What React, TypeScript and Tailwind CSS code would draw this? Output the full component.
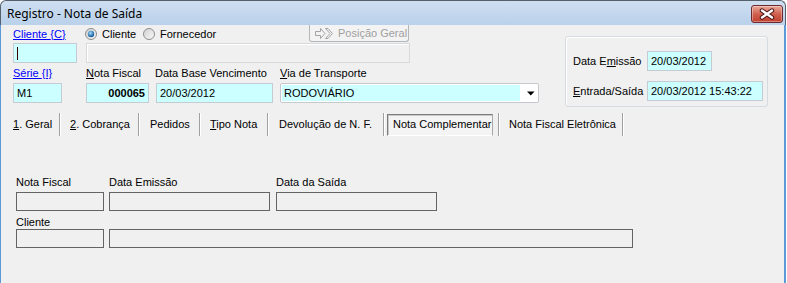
import React from "react";

// Registro - Nota de Saída (janela estilo Windows 7)

const RadioDot: React.FC<{ checked?: boolean }> = ({ checked }) => (
  <svg width="12" height="12" viewBox="0 0 12 12" className="shrink-0">
    <defs>
      <linearGradient id={checked ? "rgOn" : "rgOff"} x1="0" y1="0" x2="1" y2="1">
        <stop offset="0" stopColor="#cfcfcf" />
        <stop offset="1" stopColor="#fbfbfb" />
      </linearGradient>
      <radialGradient id="rbDot" cx="40%" cy="35%" r="65%">
        <stop offset="0" stopColor="#a6dcff" />
        <stop offset="1" stopColor="#0b5596" />
      </radialGradient>
    </defs>
    <circle cx="6" cy="6" r="5.5" fill={`url(#${checked ? "rgOn" : "rgOff"})`} stroke="#8d8d8d" />
    {checked && <circle cx="6" cy="6" r="3.2" fill="url(#rbDot)" />}
  </svg>
);

const CloseButton = () => (
  <div className="mt-[4px] h-[18px] w-[32px] rounded-[3px] border border-[#6e2a2a] bg-gradient-to-b from-[#e9a99b] via-[#d0614f] to-[#bf3d2b] shadow-[inset_0_0_0_1px_rgba(255,255,255,0.35)]">
    <svg width="30" height="16" viewBox="0 0 30 16">
      <path d="M10 4.5 L20 11.5 M20 4.5 L10 11.5" stroke="#4a1414" strokeWidth="4.4" strokeLinecap="round" />
      <path d="M10 4.5 L20 11.5 M20 4.5 L10 11.5" stroke="#ffffff" strokeWidth="2.4" strokeLinecap="round" />
    </svg>
  </div>
);

const ArrowsIcon = () => (
  <svg width="19" height="11" viewBox="0 0 19 11" className="shrink-0">
    <path d="M0.5 3.5 H5.5 V0.5 L10 5.5 L5.5 10.5 V7.5 H0.5 Z" fill="none" stroke="#a3a3a3" />
    <path d="M10.5 0.5 H13 L17.5 5.5 L13 10.5 H10.5 L15 5.5 Z" fill="none" stroke="#a3a3a3" />
  </svg>
);

const Box: React.FC<{ w: string; children?: React.ReactNode; className?: string }> = ({ w, children, className = "" }) => (
  <div className={`${w} flex h-[20px] items-center whitespace-nowrap border border-[#c4cbd3] bg-[#ccffff] px-[3px] ${className}`}>{children}</div>
);

const Sep = () => <div className="h-[23px] w-[2px] border-l border-r border-l-[#a0a0a0] border-r-white" />;

const Tab: React.FC<{ w: string; children: React.ReactNode }> = ({ w, children }) => (
  <div className={`${w} flex h-[23px] items-center whitespace-nowrap`}>{children}</div>
);

export default function App() {
  return (
    <div className="h-[283px] w-[787px] overflow-hidden bg-white font-['Liberation_Sans',Arial,sans-serif] text-[11px] leading-[13px] text-black">
      <div className="flex h-full w-[786px] flex-col">
        {/* barra de título */}
        <div className="flex h-[25px] shrink-0 items-start justify-between rounded-t-[6px] border-x border-t border-[#56606b] bg-gradient-to-b from-[#cfdff1] to-[#b9d1ea] pl-[6px] pr-[2px]">
          <span className="mt-[6px] font-['Noto_Sans',sans-serif] text-[12px] leading-[14px] text-black">Registro - Nota de Saída</span>
          <CloseButton />
        </div>

        {/* área cliente */}
        <div className="flex flex-1 flex-col border-l border-r-2 border-[#5b9ad6] bg-[#f0f0f0] pl-[12px]">
          <div className="flex items-start">
            <div className="flex w-[527px] flex-col">
              <div className="flex h-[18px] items-center">
                <span className="w-[72px] text-[#0000ff] underline">Cliente {"{C}"}</span>
                <label className="flex w-[58px] items-center gap-[5px]">
                  <RadioDot checked />
                  <span>Cliente</span>
                </label>
                <label className="flex w-[166px] items-center gap-[5px]">
                  <RadioDot />
                  <span>Fornecedor</span>
                </label>
                <div className="flex h-[17px] w-[100px] items-center gap-[4px] self-start whitespace-nowrap rounded-b-[3px] border border-t-0 border-[#b3b7ba] bg-[#f3f3f3] pl-[5px] text-[#a0a0a0]">
                  <ArrowsIcon />
                  <span>Posição Geral</span>
                </div>
              </div>

              <div className="flex h-[20px] gap-[9px]">
                <div className="flex h-[20px] w-[64px] items-center border border-[#c4cbd3] bg-[#ccffff] pl-[3px]">
                  <span className="h-[13px] w-[1px] bg-[#3a0000]" />
                </div>
                <div className="h-[20px] w-[324px] border border-[#d7d9db] bg-[#f0f0f0] shadow-[inset_1px_1px_0_#ffffff]" />
              </div>

              <div className="flex h-[20px] pt-[4px]">
                <span className="w-[73px]"><span className="text-[#0000ff] underline">Série {"{I}"}</span></span>
                <span className="w-[69px]"><u>N</u>ota Fiscal</span>
                <span className="w-[125px]">Data Base Vencimento</span>
                <span><u>V</u>ia de Transporte</span>
              </div>

              <div className="flex h-[20px]">
                <Box w="w-[49px]">M1</Box>
                <Box w="w-[63px] ml-[24px] justify-end font-bold">000065</Box>
                <Box w="w-[117px] ml-[7px]">20/03/2012</Box>
                <div className="ml-[7px] flex h-[20px] w-[259px] items-center rounded-[2px] border border-[#c5c9cd] bg-white p-[1px]">
                  <div className="flex h-full w-[238px] items-center bg-[#ccffff] pl-[2px]">RODOVIÁRIO</div>
                  <svg width="8" height="5" viewBox="0 0 8 5" className="ml-[7px]">
                    <path d="M0 0.5 H7.5 L3.75 4.5 Z" fill="#000" />
                  </svg>
                </div>
              </div>
            </div>

            {/* grupo de datas */}
            <div className="ml-[25px] mt-[11px] flex h-[71px] w-[203px] flex-col gap-[10px] rounded-[3px] border border-[#d5dbe0] pl-[7px] pt-[14px] shadow-[inset_1px_1px_0_#ffffff]">
              <div className="flex h-[20px] items-center">
                <span className="w-[74px]">Data E<u>m</u>issão</span>
                <Box w="w-[65px]">20/03/2012</Box>
              </div>
              <div className="flex h-[20px] items-center">
                <span className="w-[74px]"><u>E</u>ntrada/Saída</span>
                <Box w="w-[116px]">20/03/2012 15:43:22</Box>
              </div>
            </div>
          </div>

          {/* abas */}
          <div className="mt-[6px] flex h-[23px] items-center">
            <Tab w="w-[46px]"><span><u>1</u>. Geral</span></Tab>
            <Sep />
            <Tab w="w-[77px] pl-[9px]"><span><u>2</u>. Cobrança</span></Tab>
            <Sep />
            <Tab w="w-[59px] pl-[10px]"><span>Pedidos</span></Tab>
            <Sep />
            <Tab w="w-[66px] pl-[9px]"><span><u>T</u>ipo Nota</span></Tab>
            <Sep />
            <Tab w="w-[114px] pl-[10px]"><span>Devolução de N. F.</span></Tab>
            <Sep />
            <div className="ml-[2px] flex h-[22px] w-[106px] items-center whitespace-nowrap border border-[#7c7c7c] border-b-white border-r-[#a9a9a9] bg-[#f4f4f4] pl-[5px] shadow-[inset_1px_1px_0_#c9c9c9]">
              Nota Complementar
            </div>
            <div className="ml-[5px]"><Sep /></div>
            <Tab w="w-[122px] pl-[9px]"><span>Nota Fiscal Eletrônica</span></Tab>
            <Sep />
          </div>

          {/* nota complementar */}
          <div className="mt-[40px] flex flex-col pl-[3px]">
            <div className="flex">
              <span className="w-[93px]">Nota Fiscal</span>
              <span className="w-[167px]">Data Emissão</span>
              <span>Data da Saída</span>
            </div>
            <div className="mt-[3px] flex">
              <div className="h-[19px] w-[88px] border border-[#646464]" />
              <div className="ml-[5px] h-[19px] w-[161px] border border-[#646464]" />
              <div className="ml-[6px] h-[19px] w-[161px] border border-[#646464]" />
            </div>
            <span className="mt-[5px]">Cliente</span>
            <div className="flex">
              <div className="h-[19px] w-[88px] border border-[#646464]" />
              <div className="ml-[5px] h-[19px] w-[524px] border border-[#646464]" />
            </div>
          </div>
        </div>
      </div>
    </div>
  );
}
